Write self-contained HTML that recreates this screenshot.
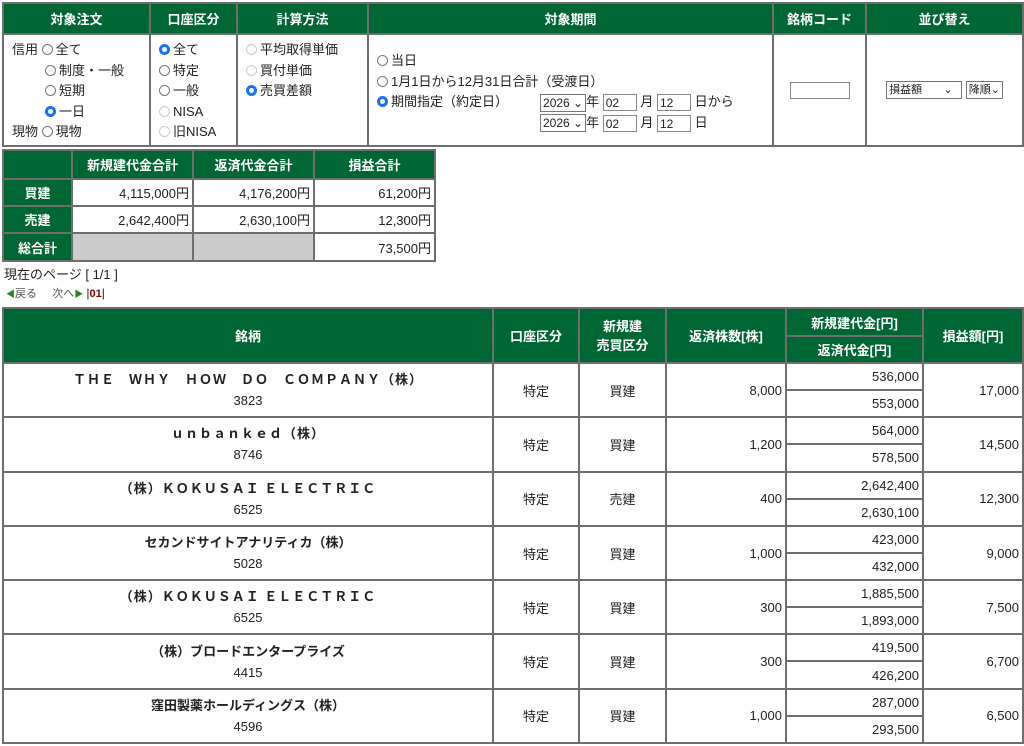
<!DOCTYPE html>
<html><head><meta charset="utf-8"><style>
body{margin:0;width:1024px;height:746px;background:#fff;font-family:"Liberation Sans","Noto Sans CJK JP",sans-serif;font-size:13px;color:#222;position:relative;overflow:hidden}
table{border-collapse:collapse;table-layout:fixed;position:absolute}
td,th{border:2px solid #6e6e6e;padding:0;font-size:13px}
th{background:#006633;color:#fff;font-weight:bold}
.r{text-align:right;padding-right:3px}
.c{text-align:center}
.rad{display:inline-block;width:11px;height:11px;border:1px solid #777;border-radius:50%;vertical-align:-1px;margin-right:3px;box-sizing:border-box}
.rad.on{border:3px solid #1a73e8;background:#fff}
.rad.dis{border-color:#ccc}
.sel{display:inline-block;border:1px solid #777;font-size:12px;height:16px;line-height:16px;padding:0 2px;vertical-align:middle}
.inp{display:inline-block;border:1px solid #888;height:17px;width:34px;font-size:12px;line-height:17px;padding-left:2px;vertical-align:middle;box-sizing:border-box}
.nm{font-weight:bold;letter-spacing:1px}
tr.a{height:27px}tr.b{height:27.3px}
</style></head><body>
<table style="left:2px;top:2px;width:1020px">
<colgroup><col style="width:147px"><col style="width:87px"><col style="width:131px"><col style="width:405px"><col style="width:93px"><col style="width:157px"></colgroup>
<tr style="height:31px"><th>対象注文</th><th>口座区分</th><th>計算方法</th><th>対象期間</th><th>銘柄コード</th><th>並び替え</th></tr>
<tr style="height:112px">
<td style="vertical-align:top;padding:5px 0 0 8px;line-height:20.5px">信用 <span class="rad"></span>全て<br><span style="padding-left:33px"></span><span class="rad"></span>制度・一般<br><span style="padding-left:33px"></span><span class="rad"></span>短期<br><span style="padding-left:33px"></span><span class="rad on"></span>一日<br>現物 <span class="rad"></span>現物</td>
<td style="vertical-align:top;padding:5px 0 0 8px;line-height:20.5px"><span class="rad on"></span>全て<br><span class="rad"></span>特定<br><span class="rad"></span>一般<br><span class="rad dis"></span>NISA<br><span class="rad dis"></span>旧NISA</td>
<td style="vertical-align:top;padding:5px 0 0 8px;line-height:20.5px"><span class="rad dis"></span>平均取得単価<br><span class="rad dis"></span>買付単価<br><span class="rad on"></span>売買差額</td>
<td style="padding:6px 0 0 8px;line-height:20.5px;vertical-align:top"><div style="margin-top:10px"><span class="rad"></span>当日<br><span class="rad"></span>1月1日から12月31日合計（受渡日）<br><span class="rad on"></span>期間指定（約定日）<span style="display:inline-block;width:32px"></span><span class="sel">2026 ⌄</span>年 <span class="inp">02</span> 月 <span class="inp">12</span> 日から<br><span style="display:inline-block;width:163px"></span><span class="sel">2026 ⌄</span>年 <span class="inp">02</span> 月 <span class="inp">12</span> 日</div></td>
<td class="c"><span class="inp" style="width:60px"></span></td>
<td class="c"><span class="sel" style="width:70px;text-align:left;font-size:11px">損益額 &nbsp; &nbsp; &nbsp; ⌄</span> <span class="sel" style="font-size:11px">降順⌄</span></td>
</tr></table>

<table style="left:2px;top:149px;width:432px">
<colgroup><col style="width:69px"><col style="width:121px"><col style="width:121px"><col style="width:121px"></colgroup>
<tr style="height:29px"><th></th><th>新規建代金合計</th><th>返済代金合計</th><th>損益合計</th></tr>
<tr style="height:27px"><th>買建</th><td class="r">4,115,000円</td><td class="r">4,176,200円</td><td class="r">61,200円</td></tr>
<tr style="height:27px"><th>売建</th><td class="r">2,642,400円</td><td class="r">2,630,100円</td><td class="r">12,300円</td></tr>
<tr style="height:28px"><th>総合計</th><td style="background:#ccc"></td><td style="background:#ccc"></td><td class="r">73,500円</td></tr>
</table>
<div style="position:absolute;left:4px;top:264px;font-size:13px">現在のページ [ 1/1 ]</div>
<div style="position:absolute;left:6px;top:285px;font-size:11px;color:#555"><span style="color:#2a8a2a;font-size:9px">◀</span>戻る &nbsp; &nbsp; 次へ<span style="color:#2a8a2a;font-size:9px">▶</span> <span style="font-size:12px;color:#222">|</span><b style="color:#800;font-size:11px">01</b><span style="color:#222;font-size:12px">|</span></div>

<table style="left:2px;top:307px;width:1020px">
<colgroup><col style="width:490px"><col style="width:86px"><col style="width:87px"><col style="width:120px"><col style="width:137px"><col style="width:100px"></colgroup>
<tr style="height:28px"><th rowspan="2">銘柄</th><th rowspan="2">口座区分</th><th rowspan="2" style="line-height:19px">新規建<br>売買区分</th><th rowspan="2">返済株数[株]</th><th>新規建代金[円]</th><th rowspan="2">損益額[円]</th></tr>
<tr style="height:27px"><th>返済代金[円]</th></tr>
<tr class="a"><td rowspan="2" class="c" style="line-height:21px"><span class="nm">ＴＨＥ　ＷＨＹ　ＨＯＷ　ＤＯ　ＣＯＭＰＡＮＹ（株）</span><br>3823</td><td rowspan="2" class="c">特定</td><td rowspan="2" class="c">買建</td><td rowspan="2" class="r">8,000</td><td class="r">536,000</td><td rowspan="2" class="r">17,000</td></tr>
<tr class="b"><td class="r">553,000</td></tr>
<tr class="a"><td rowspan="2" class="c" style="line-height:21px"><span class="nm">ｕｎｂａｎｋｅｄ（株）</span><br>8746</td><td rowspan="2" class="c">特定</td><td rowspan="2" class="c">買建</td><td rowspan="2" class="r">1,200</td><td class="r">564,000</td><td rowspan="2" class="r">14,500</td></tr>
<tr class="b"><td class="r">578,500</td></tr>
<tr class="a"><td rowspan="2" class="c" style="line-height:21px"><span class="nm">（株）ＫＯＫＵＳＡＩ ＥＬＥＣＴＲＩＣ</span><br>6525</td><td rowspan="2" class="c">特定</td><td rowspan="2" class="c">売建</td><td rowspan="2" class="r">400</td><td class="r">2,642,400</td><td rowspan="2" class="r">12,300</td></tr>
<tr class="b"><td class="r">2,630,100</td></tr>
<tr class="a"><td rowspan="2" class="c" style="line-height:21px"><span class="nm" style="letter-spacing:0">セカンドサイトアナリティカ（株）</span><br>5028</td><td rowspan="2" class="c">特定</td><td rowspan="2" class="c">買建</td><td rowspan="2" class="r">1,000</td><td class="r">423,000</td><td rowspan="2" class="r">9,000</td></tr>
<tr class="b"><td class="r">432,000</td></tr>
<tr class="a"><td rowspan="2" class="c" style="line-height:21px"><span class="nm">（株）ＫＯＫＵＳＡＩ ＥＬＥＣＴＲＩＣ</span><br>6525</td><td rowspan="2" class="c">特定</td><td rowspan="2" class="c">買建</td><td rowspan="2" class="r">300</td><td class="r">1,885,500</td><td rowspan="2" class="r">7,500</td></tr>
<tr class="b"><td class="r">1,893,000</td></tr>
<tr class="a"><td rowspan="2" class="c" style="line-height:21px"><span class="nm" style="letter-spacing:0">（株）ブロードエンタープライズ</span><br>4415</td><td rowspan="2" class="c">特定</td><td rowspan="2" class="c">買建</td><td rowspan="2" class="r">300</td><td class="r">419,500</td><td rowspan="2" class="r">6,700</td></tr>
<tr class="b"><td class="r">426,200</td></tr>
<tr class="a"><td rowspan="2" class="c" style="line-height:21px"><span class="nm" style="letter-spacing:0">窪田製薬ホールディングス（株）</span><br>4596</td><td rowspan="2" class="c">特定</td><td rowspan="2" class="c">買建</td><td rowspan="2" class="r">1,000</td><td class="r">287,000</td><td rowspan="2" class="r">6,500</td></tr>
<tr class="b"><td class="r">293,500</td></tr>
</table>
</body></html>
